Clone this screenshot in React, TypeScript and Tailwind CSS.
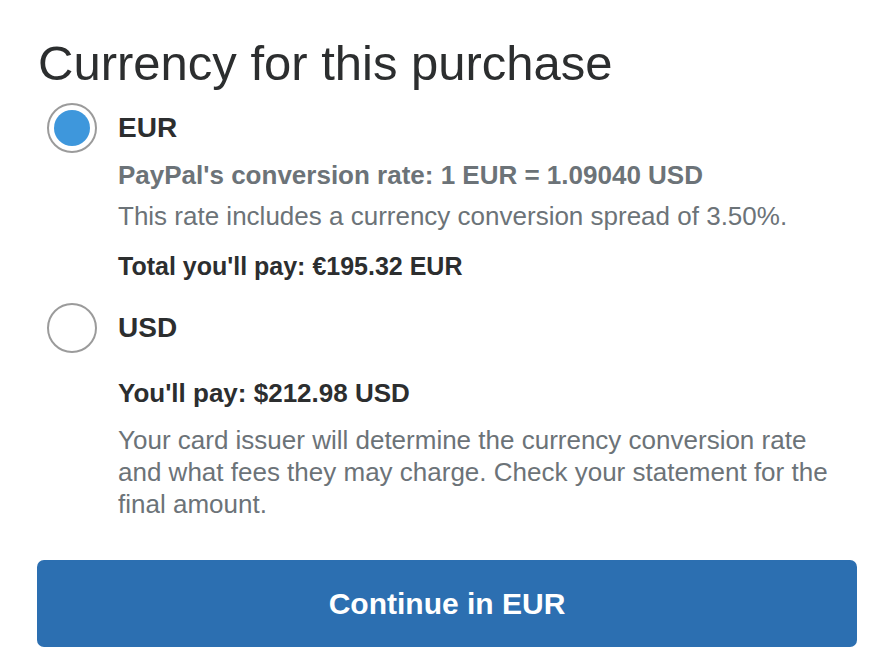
import React from "react";

function Radio({ checked }: { checked: boolean }) {
  return (
    <div className="w-[50px] h-[50px] rounded-full border-2 border-[#9b9b9b] bg-white flex items-center justify-center shrink-0">
      {checked && <div className="w-[36px] h-[36px] rounded-full bg-[#3e97dc]" />}
    </div>
  );
}

export default function App() {
  return (
    <div
      className="w-[890px] h-[666px] bg-white overflow-hidden pl-[37px] pr-[33px] text-[#2c2e2f]"
      style={{ fontFamily: '"Liberation Sans", Arial, sans-serif' }}
    >
      <h1 className="text-[49px] leading-[56px] pt-[35px] pl-[1px] font-normal">Currency for this purchase</h1>
      <div className="flex items-center gap-[21px] pl-[10px] mt-[12px]">
        <Radio checked={true} />
        <div className="text-[28px] font-bold leading-[32px]">EUR</div>
      </div>
      <div className="pl-[81px]">
        <div className="text-[26px] font-bold text-[#6c7378] leading-[32px] mt-[6px]">
          PayPal's conversion rate: 1 EUR = 1.09040 USD
        </div>
        <div className="text-[26px] text-[#6c7378] leading-[32px] mt-[9px]">
          This rate includes a currency conversion spread of 3.50%.
        </div>
        <div className="text-[25px] font-bold leading-[32px] mt-[18px]">Total you'll pay: €195.32 EUR</div>
      </div>
      <div className="flex items-center gap-[21px] pl-[10px] mt-[21px]">
        <Radio checked={false} />
        <div className="text-[28px] font-bold leading-[32px]">USD</div>
      </div>
      <div className="pl-[81px]">
        <div className="text-[26px] font-bold leading-[32px] mt-[24px]">You'll pay: $212.98 USD</div>
        <div className="w-[730px] text-[26px] text-[#6c7378] leading-[32px] mt-[15px]">
          Your card issuer will determine the currency conversion rate and what fees they may charge. Check your
          statement for the final amount.
        </div>
      </div>
      <button className="mt-[40px] w-[820px] h-[87px] rounded-[7px] bg-[#2c6fb1] text-white text-[30px] font-bold flex items-center justify-center">
        Continue in EUR
      </button>
    </div>
  );
}
